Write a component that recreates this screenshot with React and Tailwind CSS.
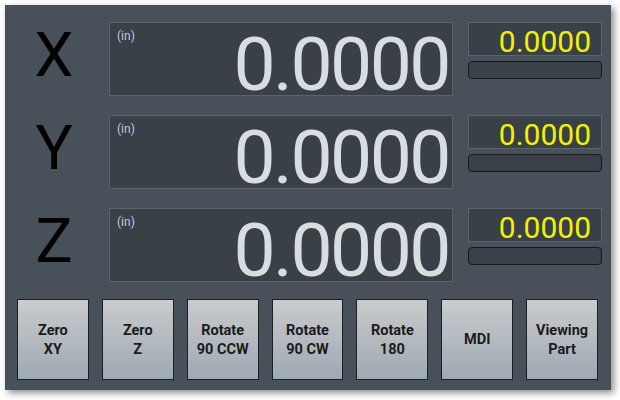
import React from 'react';

const axes = ['X', 'Y', 'Z'];
const buttons = [
  ['Zero', 'XY'],
  ['Zero', 'Z'],
  ['Rotate', '90 CCW'],
  ['Rotate', '90 CW'],
  ['Rotate', '180'],
  ['MDI'],
  ['Viewing', 'Part'],
];

function AxisRow({ axis }) {
  return (
    <div className="flex h-[74px]">
      <div className="w-[104px] flex items-center justify-center text-[62px] leading-none text-black pb-[8px] pr-[6px]">
        {axis}
      </div>
      <div className="relative w-[344px] bg-[#3a4047] border border-[#5e6367] flex items-end justify-end pr-[3px]">
        <span className="absolute left-[7px] top-[4px] text-[12px] text-[#bfcbd8]">(in)</span>
        <span className="text-[75px] leading-[75px] text-[#dadde0] -mb-[7px] tracking-[-2.5px]">0.0000</span>
      </div>
      <div className="ml-[15px] w-[134px] flex flex-col gap-[5px]">
        <div className="h-[34px] bg-[#3a4047] border border-[#5e6367] flex items-center justify-end pr-[10px]">
          <span className="text-[30px] leading-none text-[#f2f200] pt-[5px]">0.0000</span>
        </div>
        <div className="h-[18px] rounded-[4px] bg-[#3b4148] border border-[#16191c]"></div>
      </div>
    </div>
  );
}

export default function App() {
  return (
    <div className="w-[620px] h-[400px] bg-white pt-[5px] pl-[5px]" style={{ fontFamily: 'Roboto, sans-serif' }}>
      <div className="w-[606px] h-[385px] bg-[#48515a] shadow-[3px_3px_7px_rgba(0,0,0,0.45)] pt-[17px] flex flex-col">
        <div className="flex flex-col gap-[19px]">
          {axes.map(a => <AxisRow key={a} axis={a} />)}
        </div>
        <div className="mt-[17px] ml-[12px] w-[581px] grid grid-cols-7 gap-[13px]">
          {buttons.map((b, i) => (
            <button
              key={i}
              className="h-[81px] border border-[#1c2024] bg-gradient-to-b from-[#cacbcc] to-[#9ea9b3] flex flex-col items-center justify-center text-[14.5px] font-bold leading-[19px] text-[#1b1b1b]"
            >
              {b.map((line, j) => <span key={j}>{line}</span>)}
            </button>
          ))}
        </div>
      </div>
    </div>
  );
}
